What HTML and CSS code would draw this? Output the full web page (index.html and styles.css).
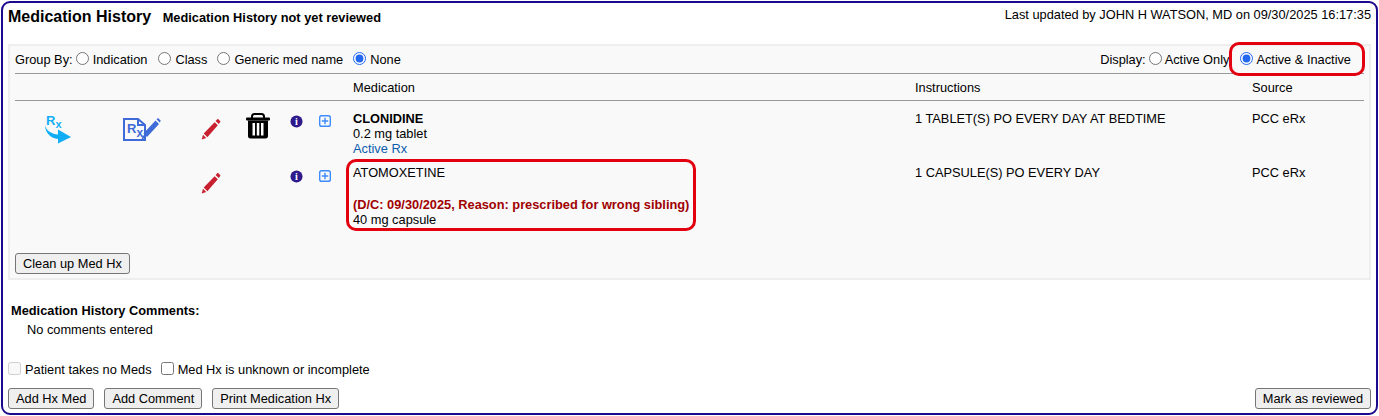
FILE: index.html
```html
<!DOCTYPE html>
<html>
<head>
  <title>Medication History</title>
  <link rel="stylesheet" href="styles.css">
</head>
<body>
  <div class="frame">
    <div class="header">
      <div>
        <span class="title">Medication History</span>
        <span class="review-status">Medication History not yet reviewed</span>
      </div>
      <div class="updated">Last updated by JOHN H WATSON, MD on 09/30/2025 16:17:35</div>
    </div>

    <div class="panel">
      <div class="filters">
        <div class="filter-group">
          <span class="filter-label">Group By:</span>
          <label class="opt opt-indication"><input type="radio" name="group">Indication</label>
          <label class="opt opt-class"><input type="radio" name="group">Class</label>
          <label class="opt opt-generic"><input type="radio" name="group">Generic med name</label>
          <label class="opt"><input type="radio" name="group" checked>None</label>
        </div>
        <div class="filter-group">
          <span class="filter-label">Display:</span>
          <label class="opt opt-active"><input type="radio" name="display">Active Only</label>
          <label class="opt opt-both"><input type="radio" name="display" checked>Active &amp; Inactive</label>
          <div class="callout callout-display"></div>
        </div>
      </div>

      <div class="med-row head-row">
        <div class="col-med">Medication</div>
        <div class="col-instr">Instructions</div>
        <div class="col-source">Source</div>
      </div>

      <div class="med-row first-row">
        <div class="icon-cell">
          <svg width="28" height="30" viewBox="0 0 28 30">
            <text x="2" y="11" class="rx-send-r">R<tspan dy="3" class="rx-send-x">x</tspan></text>
            <path class="rx-send" d="M1 11C2 17 8 20 14 20.500V15.500L27 23 14 29.500V25C7 24.500 1 19 1 11Z"/>
          </svg>
        </div>
        <div class="icon-cell">
          <svg width="38" height="24" viewBox="0 0 38 24">
            <path class="doc" d="M1 1H15L22 7V22H1Z"/>
            <path class="doc" d="M15 1V7H22"/>
            <text x="4" y="15" class="rx-doc-r">R<tspan dy="4" class="rx-doc-x">x</tspan></text>
            <path class="pencil-blue" d="M32.500 2.500 36 6 24 19 20.500 15.500ZM33.500 1.200 35 0 37.800 2.800 36.700 4.400ZM20 17 22.800 19.800 18.500 21.500Z"/>
          </svg>
        </div>
        <div class="icon-cell pencil-cell">
          <svg width="20" height="22" viewBox="0 0 22 24">
            <path class="pencil-red" d="M15 4.500 18.500 8 7 21 3 17ZM16 3.200 18.500 .8 21.500 3.800 19.600 6.500ZM2.200 18.200 5.800 22 .8 23.500Z"/>
          </svg>
        </div>
        <div class="icon-cell trash-cell">
          <svg width="24" height="26" viewBox="0 0 24 26">
            <path d="M6 5V3.500C6 2 7 1 8.500 1H15.500C17 1 18 2 18 3.500V5" fill="none" stroke="#000" stroke-width="2"/>
            <rect x="0" y="4.500" width="24" height="3" rx="1"/>
            <path d="M2 7.500H22V23C22 24.700 21 25.500 19.500 25.500H4.500C3 25.500 2 24.700 2 23Z"/>
            <rect class="slot" x="6.500" y="10" width="2.500" height="12.500"/>
            <rect class="slot" x="10.800" y="10" width="2.500" height="12.500"/>
            <rect class="slot" x="15" y="10" width="2.500" height="12.500"/>
          </svg>
        </div>
        <div class="icon-cell small-cell">
          <svg width="13" height="13" viewBox="0 0 14 14">
            <circle class="info" cx="7" cy="7" r="6.500"/>
            <text x="7" y="11" class="info-i">i</text>
          </svg>
        </div>
        <div class="icon-cell small-cell">
          <svg width="12" height="12" viewBox="0 0 13 13">
            <rect class="plus" x=".75" y=".75" width="11.500" height="11.500" rx="2"/>
            <path class="plus" d="M6.500 3V10M3 6.500H10"/>
          </svg>
        </div>
        <div class="spacer"></div>
        <div class="col-med">
          <div class="med-name">CLONIDINE</div>
          <div>0.2 mg tablet</div>
          <div class="active-rx">Active Rx</div>
        </div>
        <div class="col-instr">1 TABLET(S) PO EVERY DAY AT BEDTIME</div>
        <div class="col-source">PCC eRx</div>
      </div>

      <div class="med-row">
        <div class="icon-cell"></div>
        <div class="icon-cell"></div>
        <div class="icon-cell pencil-cell-2">
          <svg width="20" height="22" viewBox="0 0 22 24">
            <path class="pencil-red" d="M15 4.500 18.500 8 7 21 3 17ZM16 3.200 18.500 .8 21.500 3.800 19.600 6.500ZM2.200 18.200 5.800 22 .8 23.500Z"/>
          </svg>
        </div>
        <div class="icon-cell"></div>
        <div class="icon-cell small-cell-2">
          <svg width="13" height="13" viewBox="0 0 14 14">
            <circle class="info" cx="7" cy="7" r="6.500"/>
            <text x="7" y="11" class="info-i">i</text>
          </svg>
        </div>
        <div class="icon-cell small-cell-2">
          <svg width="12" height="12" viewBox="0 0 13 13">
            <rect class="plus" x=".75" y=".75" width="11.500" height="11.500" rx="2"/>
            <path class="plus" d="M6.500 3V10M3 6.500H10"/>
          </svg>
        </div>
        <div class="spacer"></div>
        <div class="col-med atomox">
          <div>ATOMOXETINE</div>
          <div class="blank-line"></div>
          <div class="dc-reason">(D/C: 09/30/2025, Reason: prescribed for wrong sibling)</div>
          <div>40 mg capsule</div>
          <div class="callout callout-med"></div>
        </div>
        <div class="col-instr">1 CAPSULE(S) PO EVERY DAY</div>
        <div class="col-source">PCC eRx</div>
      </div>

      <button class="btn cleanup">Clean up Med Hx</button>
    </div>

    <div class="comments">
      <div class="comments-title">Medication History Comments:</div>
      <div class="comments-body">No comments entered</div>
    </div>

    <div class="checks">
      <label class="check"><input type="checkbox" disabled>Patient takes no Meds</label>
      <label class="check"><input type="checkbox">Med Hx is unknown or incomplete</label>
    </div>

    <div class="actions">
      <div class="actions-left">
        <button class="btn">Add Hx Med</button>
        <button class="btn">Add Comment</button>
        <button class="btn">Print Medication Hx</button>
      </div>
      <button class="btn">Mark as reviewed</button>
    </div>
  </div>
</body>
</html>
```

FILE: styles.css
```css
html, body {
  margin: 0;
  padding: 0;
}

body {
  font-family: "Liberation Sans", Arial, sans-serif;
  font-size: 12.8px;
  line-height: 15px;
  color: #000;
  background: #fff;
}

.frame {
  box-sizing: border-box;
  height: 414px;
  margin: 1px;
  padding: 3px 5px 4px;
  border: 2px solid #1c0a8e;
  border-radius: 9px;
  display: flex;
  flex-direction: column;
}

.header {
  display: flex;
  justify-content: space-between;
  align-items: flex-start;
  height: 38px;
}

.title {
  font-size: 16px;
  font-weight: bold;
  line-height: 22px;
  margin-right: 8px;
}

.review-status {
  font-size: 12.8px;
  font-weight: bold;
}

.updated {
  font-size: 12.8px;
  line-height: 17px;
}

.panel {
  box-sizing: border-box;
  height: 236px;
  padding: 0 5px;
  background: #f9f9f9;
  border: 2px solid #eee;
}

.filters {
  position: relative;
  display: flex;
  justify-content: space-between;
  align-items: center;
  height: 27px;
  border-bottom: 1px solid #999;
}

.filter-group {
  position: relative;
  display: flex;
  align-items: center;
}

.opt {
  display: flex;
  align-items: center;
}

.opt input {
  margin: 0 4px 2px 3px;
}

.opt-indication {
  margin-right: 8px;
}

.opt-class, .opt-generic {
  margin-right: 7px;
}

.opt-active input, .opt-both input {
  margin-right: 3px;
}

.opt-both {
  margin-left: 8px;
  margin-right: 13px;
}

.opt input[type=radio] {
  accent-color: #2468f2;
}

.callout {
  position: absolute;
  box-sizing: border-box;
  border: 3px solid #e3000f;
  border-radius: 10px;
}

.callout-display {
  right: -1px;
  top: -10px;
  width: 136px;
  height: 34px;
}

.callout-med {
  left: -7px;
  top: -6px;
  width: 350px;
  height: 72px;
}

.med-row {
  display: grid;
  grid-template-columns: 86px 82px 56px 38px 38px 20px 18px 562px 337px 113px;
}

.head-row {
  grid-template-columns: 338px 562px 337px 113px;
  padding: 6px 0 5px;
  border-bottom: 1px solid #999;
}

.head-row .col-med {
  grid-column: 2;
}

.first-row {
  padding: 10px 0 9px;
}

.icon-cell {
  display: flex;
  justify-content: center;
  align-items: flex-start;
}

.first-row .icon-cell:nth-child(1) {
  padding-top: 3px;
}

.first-row .icon-cell:nth-child(2) {
  padding-top: 7px;
}

.pencil-cell {
  padding-top: 7px;
}

.trash-cell {
  padding-top: 2px;
}

.small-cell {
  padding-top: 4px;
}

.pencil-cell-2 {
  padding-top: 7px;
}

.small-cell-2 {
  padding-top: 5px;
}

.med-name {
  font-weight: bold;
}

.active-rx {
  color: #0b5cad;
}

.atomox {
  position: relative;
}

.blank-line {
  height: 17px;
}

.dc-reason {
  color: #a00000;
  font-weight: bold;
}

.btn {
  font-family: "Liberation Sans", Arial, sans-serif;
  font-size: 12.8px;
  line-height: 15px;
  height: 21px;
  padding: 0 7px 1px;
  color: #000;
  background: #efefef;
  border: 1px solid #767676;
  border-radius: 3px;
}

.cleanup {
  display: block;
  margin-top: 26px;
}

.comments {
  margin-top: 23px;
  padding-left: 3px;
}

.comments-title {
  font-weight: bold;
  line-height: 15px;
}

.comments-body {
  margin-top: 4px;
  padding-left: 16px;
}

.checks {
  display: flex;
  margin-top: 25px;
}

.check {
  display: flex;
  align-items: center;
  margin-right: 9px;
}

.check input {
  margin: 0 4px 2px 0;
}

.actions {
  display: flex;
  justify-content: space-between;
  margin-top: auto;
}

.actions-left {
  display: flex;
  gap: 10px;
}

/* icons */
.rx-send { fill: #12aef5; }
.rx-send-r { font: bold 13px "Liberation Sans", sans-serif; fill: #12aef5; }
.rx-send-x { font-size: 11px; }

.doc { fill: none; stroke: #3f6bd8; stroke-width: 2; }
.rx-doc-r { font: bold 13px "Liberation Sans", sans-serif; fill: #3f6bd8; }
.rx-doc-x { font-size: 12px; }
.pencil-blue { fill: #3f6bd8; }
.pencil-red { fill: #c8202f; }
.slot { fill: #fff; }
.info { fill: #2e1a8c; }
.info-i { font: bold 11px "Liberation Serif", serif; fill: #fff; text-anchor: middle; }
.plus { fill: none; stroke: #3d8bfd; stroke-width: 1.5; }
```
